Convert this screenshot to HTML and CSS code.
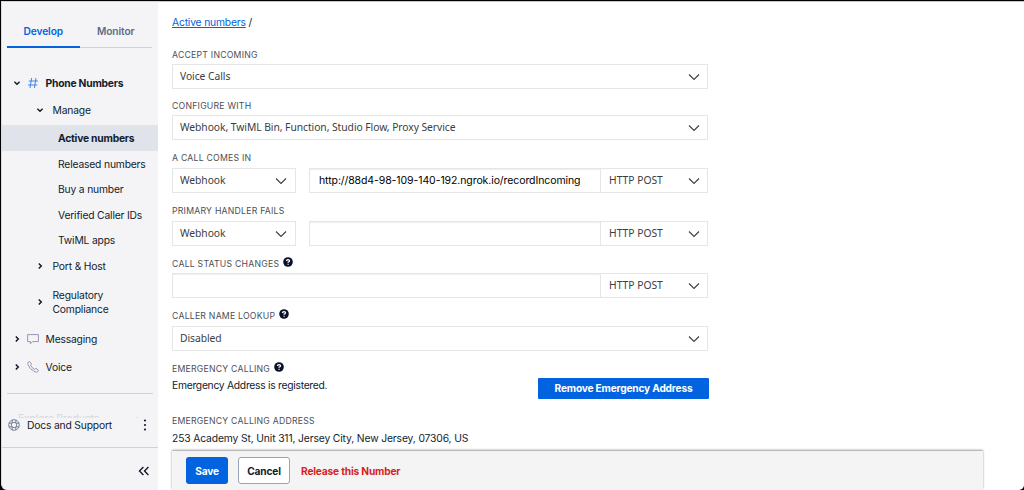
FILE: index.html
```
<!DOCTYPE html>
<html lang="en">

<head>
  <meta charset="UTF-8" />
  <meta name="viewport" content="width=device-width, initial-scale=1" />
  <title>Active numbers</title>
  <link rel="stylesheet" href="styles.css">
</head>

<body>
  <svg class="defs" width="0" height="0">
    <symbol id="caret" viewBox="0 0 8 8"><path d="M1.4 2.8 4 5.3 6.6 2.8" /></symbol>
    <symbol id="arrow" viewBox="0 0 12 8"><path d="M1 1.5 6 6.5 11 1.5" /></symbol>
    <symbol id="help" viewBox="0 0 10 10">
      <circle cx="5" cy="5" r="4.8" fill="#0b1026" />
      <path d="M3.5 4Q3.5 2.6 5 2.6T6.5 3.9Q6.5 4.6 5.1 5.1V5.8M5.1 6.7V7.8" fill="none" stroke="#fff" stroke-width="1.3" />
    </symbol>
  </svg>

  <div class="window">
    <nav class="sidebar">
      <div class="tabs">
        <a class="tab active">Develop</a>
        <a class="tab">Monitor</a>
      </div>

      <div class="menu">
        <div class="item top strong">
          <svg class="caret"><use href="#caret" /></svg>
          <svg class="icon hash" viewBox="0 0 12 12"><path d="M4.6 1 3 11M9 1 7.4 11M1.8 4H11M1 8H10.2" /></svg>
          <span>Phone Numbers</span>
        </div>
        <div class="item sub manage"><svg class="caret"><use href="#caret" /></svg><span>Manage</span></div>
        <div class="item leaf active">Active numbers</div>
        <div class="item leaf">Released numbers</div>
        <div class="item leaf">Buy a number</div>
        <div class="item leaf">Verified Caller IDs</div>
        <div class="item leaf">TwiML apps</div>
        <div class="item sub"><svg class="caret closed"><use href="#caret" /></svg><span>Port &amp; Host</span></div>
        <div class="item sub tall"><svg class="caret closed"><use href="#caret" /></svg><span>Regulatory<br>Compliance</span></div>
        <div class="item top">
          <svg class="caret closed"><use href="#caret" /></svg>
          <svg class="icon" viewBox="0 0 12 12"><path d="M.6 1.6H11.4V8.6H5.6L3.4 10.8V8.6H.6Z" /></svg>
          <span>Messaging</span>
        </div>
        <div class="item top">
          <svg class="caret closed"><use href="#caret" /></svg>
          <svg class="icon" viewBox="0 0 12 12"><path d="M1.2 1.2 2.6.6 4.6 3 3.6 4.3Q4.8 6.8 7.6 8.4L9 7.4 11.4 9.3 10.8 10.6Q9.8 11.7 8 10.9 2.6 8.4.9 3.6.4 2 1.2 1.2Z" /></svg>
          <span>Voice</span>
        </div>
      </div>

      <div class="more"><span>Explore Products</span><span>+</span></div>

      <div class="docs">
        <svg class="icon ring" viewBox="0 0 12 12">
          <circle cx="6" cy="6" r="5.3" /><circle cx="6" cy="6" r="2.7" />
          <path d="M4.2.9V4M7.8.9V4M4.2 8V11.1M7.8 8V11.1M.9 4.2H4M.9 7.8H4M8 4.2H11.1M8 7.8H11.1" />
        </svg>
        <span>Docs and Support</span>
        <svg class="dots" viewBox="0 0 4 12"><circle cx="2" cy="1.5" r="1.1" /><circle cx="2" cy="6" r="1.1" /><circle cx="2" cy="10.5" r="1.1" /></svg>
      </div>
      <div class="collapse">
        <svg viewBox="0 0 12 10"><path d="M5.4 1 1.5 5 5.4 9M10.4 1 6.5 5 10.4 9" /></svg>
      </div>
    </nav>

    <main class="content">
      <div class="crumbs"><a href="#">Active numbers</a> /</div>

      <div class="field first">
        <label>ACCEPT INCOMING</label>
        <div class="row">
          <div class="select">Voice Calls<svg class="arrow"><use href="#arrow" /></svg></div>
        </div>
      </div>
      <div class="field">
        <label>CONFIGURE WITH</label>
        <div class="row">
          <div class="select">Webhook, TwiML Bin, Function, Studio Flow, Proxy Service<svg class="arrow"><use href="#arrow" /></svg></div>
        </div>
      </div>
      <div class="field">
        <label>A CALL COMES IN</label>
        <div class="row">
          <div class="select handler">Webhook<svg class="arrow"><use href="#arrow" /></svg></div>
          <div class="input">http://88d4-98-109-140-192.ngrok.io/recordIncoming</div>
          <div class="select method">HTTP POST<svg class="arrow"><use href="#arrow" /></svg></div>
        </div>
      </div>
      <div class="field">
        <label>PRIMARY HANDLER FAILS</label>
        <div class="row">
          <div class="select handler">Webhook<svg class="arrow"><use href="#arrow" /></svg></div>
          <div class="input"></div>
          <div class="select method">HTTP POST<svg class="arrow"><use href="#arrow" /></svg></div>
        </div>
      </div>
      <div class="field">
        <label>CALL STATUS CHANGES <svg class="help"><use href="#help" /></svg></label>
        <div class="row">
          <div class="input"></div>
          <div class="select method">HTTP POST<svg class="arrow"><use href="#arrow" /></svg></div>
        </div>
      </div>
      <div class="field">
        <label>CALLER NAME LOOKUP <svg class="help"><use href="#help" /></svg></label>
        <div class="row">
          <div class="select">Disabled<svg class="arrow"><use href="#arrow" /></svg></div>
        </div>
      </div>
      <div class="emergency">
        <div>
          <label>EMERGENCY CALLING <svg class="help"><use href="#help" /></svg></label>
          <p class="status">Emergency Address is registered.</p>
        </div>
        <button class="btn remove">Remove Emergency Address</button>
      </div>
      <div>
        <label>EMERGENCY CALLING ADDRESS</label>
        <p class="address">253 Academy St, Unit 311, Jersey City, New Jersey, 07306, US</p>
      </div>

      <div class="actions">
        <button class="btn save">Save</button>
        <button class="btn cancel">Cancel</button>
        <a class="release">Release this Number</a>
      </div>
    </main>
  </div>
</body>

</html>
```
FILE: styles.css
```
* {
  box-sizing: border-box;
}

body {
  margin: 0;
  background: #000;
  font-family: Inter, "Liberation Sans", sans-serif;
  font-size: 10.3px;
  letter-spacing: -0.17px;
  color: #121c2d;
}

p {
  margin: 0;
}

svg {
  fill: none;
  flex: none;
}

.defs {
  position: absolute;
}

.window {
  display: flex;
  height: 490px;
  padding: 1px 0 0 1px;
}

.sidebar {
  display: flex;
  flex-direction: column;
  width: 157px;
  background: #f4f4f6;
  border-top: 1px solid #d5d5d8;
  border-left: 1px solid #dcdcdf;
  border-bottom-left-radius: 6px;
}

.tabs {
  display: flex;
  width: 145px;
  height: 46px;
  margin-left: 5px;
  border-bottom: 1px solid #ccd2de;
}

.tab {
  width: 72.5px;
  height: 46px;
  padding-top: 11px;
  line-height: 36px;
  text-align: center;
  font-weight: 600;
  font-size: 10.2px;
  letter-spacing: -0.1px;
  color: #606b85;
}

.tab.active {
  color: #0263e0;
  border-bottom: 2px solid #0263e0;
}

.menu {
  padding-top: 20.8px;
}

.item {
  display: flex;
  align-items: center;
  height: 25.6px;
  line-height: 14px;
}

.item.top {
  height: 28px;
  padding-left: 11px;
}

.item.sub {
  padding-left: 34px;
}

.item.sub.manage {
  height: 28.5px;
  padding-bottom: 2px;
}

.item.sub.tall {
  height: 46px;
}

.item.leaf {
  padding-left: 56px;
}

.item.strong,
.item.leaf.active {
  font-weight: 700;
  letter-spacing: -0.22px;
}

.item.leaf.active {
  background: #e1e3ea;
}

.caret {
  width: 8px;
  height: 8px;
  stroke: #121c2d;
  stroke-width: 1.5;
}

.caret.closed {
  transform: rotate(-90deg);
}

.sub .caret {
  margin-right: 8.5px;
}

.icon {
  width: 12px;
  height: 12px;
  margin: 0 6.5px 0 6px;
  stroke: #8891aa;
  stroke-width: 0.9;
}

.hash {
  stroke: #2f7de6;
}

.more {
  display: flex;
  justify-content: space-between;
  width: 146px;
  height: 25px;
  margin: 11.7px 0 0 5px;
  padding: 16px 13px 0 11px;
  border-top: 1px solid #ccd2de;
  line-height: 16px;
  font-weight: 500;
  letter-spacing: -0.17px;
  color: #d8dae1;
  overflow: hidden;
}

.docs {
  display: flex;
  align-items: center;
  padding-bottom: 15px;
  flex: 1;
  border-bottom: 1px solid #ccd2de;
}

.docs .ring {
  margin-right: 7px;
  stroke: #606b85;
  stroke-width: 0.8;
}

.dots {
  width: 4px;
  height: 12px;
  margin: 0 11px 0 auto;
  fill: #121c2d;
}

.collapse {
  display: flex;
  justify-content: flex-end;
  align-items: center;
  height: 42px;
  padding: 3px 8px 0 0;
}

.collapse svg {
  width: 12px;
  height: 10px;
  stroke: #121c2d;
  stroke-width: 1.4;
}

.content {
  display: flex;
  flex-direction: column;
  flex: 1;
  padding: 11px 0 0 14px;
  background: #fff;
  border-top: 1px solid #c8c8c8;
  border-bottom-right-radius: 5px;
}

.crumbs {
  height: 31px;
  line-height: 18px;
}

.crumbs a {
  color: #0263e0;
}

.field {
  width: 536px;
  margin-bottom: 7.6px;
}

.field.first {
  margin-bottom: 6.4px;
}

label {
  display: flex;
  align-items: center;
  height: 20px;
  padding-top: 1px;
  font-size: 8.7px;
  letter-spacing: 0.23px;
  color: #4b4f56;
}

.help {
  width: 10px;
  height: 10px;
  margin: -4px 0 0 4px;
}

.row {
  display: flex;
  height: 25px;
}

.select,
.input {
  display: flex;
  align-items: center;
  flex: 1;
  border: 1px solid #e6e6e6;
}

.select {
  justify-content: space-between;
  padding: 0 7px 1px 7px;
  font-family: "Noto Sans", sans-serif;
  font-size: 10.3px;
  letter-spacing: -0.05px;
  color: #3a3d42;
}

.arrow {
  width: 12px;
  height: 8px;
  margin-top: 2px;
  stroke: #3a3d42;
  stroke-width: 1.1;
}

.handler {
  flex: 0 0 124px;
  margin-right: 13px;
}

.input {
  padding-left: 9px;
  font-size: 10.5px;
  letter-spacing: -0.09px;
  color: #000;
  box-shadow: inset 0 1px 1px #eee;
}

.method {
  flex: 0 0 108px;
  margin-left: -1px;
  padding-left: 8px;
  letter-spacing: 0;
}

.handler .arrow {
  margin-right: 1px;
}

.emergency {
  display: flex;
  justify-content: space-between;
  align-items: flex-start;
  width: 537px;
  height: 52.5px;
}

.status {
  line-height: 15px;
  letter-spacing: -0.27px;
}

.address {
  line-height: 15px;
  letter-spacing: -0.13px;
}

.btn {
  border: none;
  border-radius: 3px;
  padding: 0;
  font-family: inherit;
  font-size: 10.2px;
  font-weight: 700;
  letter-spacing: -0.2px;
  color: #fff;
  background: #0263e0;
}

.remove {
  width: 171px;
  height: 21px;
  margin-top: 19.5px;
  border-radius: 1px;
}

.actions {
  display: flex;
  align-items: center;
  width: 811px;
  height: 39px;
  margin-top: auto;
  padding-left: 14px;
  background: #f4f4f4;
  box-shadow: 0 -1px 2px #999;
  clip-path: inset(-3px -2px 0 -2px);
}

.save {
  width: 42px;
  height: 27px;
}

.cancel {
  width: 52px;
  height: 27px;
  margin: 0 11px 0 10px;
  color: #121c2d;
  background: #fff;
  border: 1px solid #9ba3bb;
}

.release {
  font-size: 10.2px;
  font-weight: 700;
  letter-spacing: -0.18px;
  color: #d61f1f;
}
```
